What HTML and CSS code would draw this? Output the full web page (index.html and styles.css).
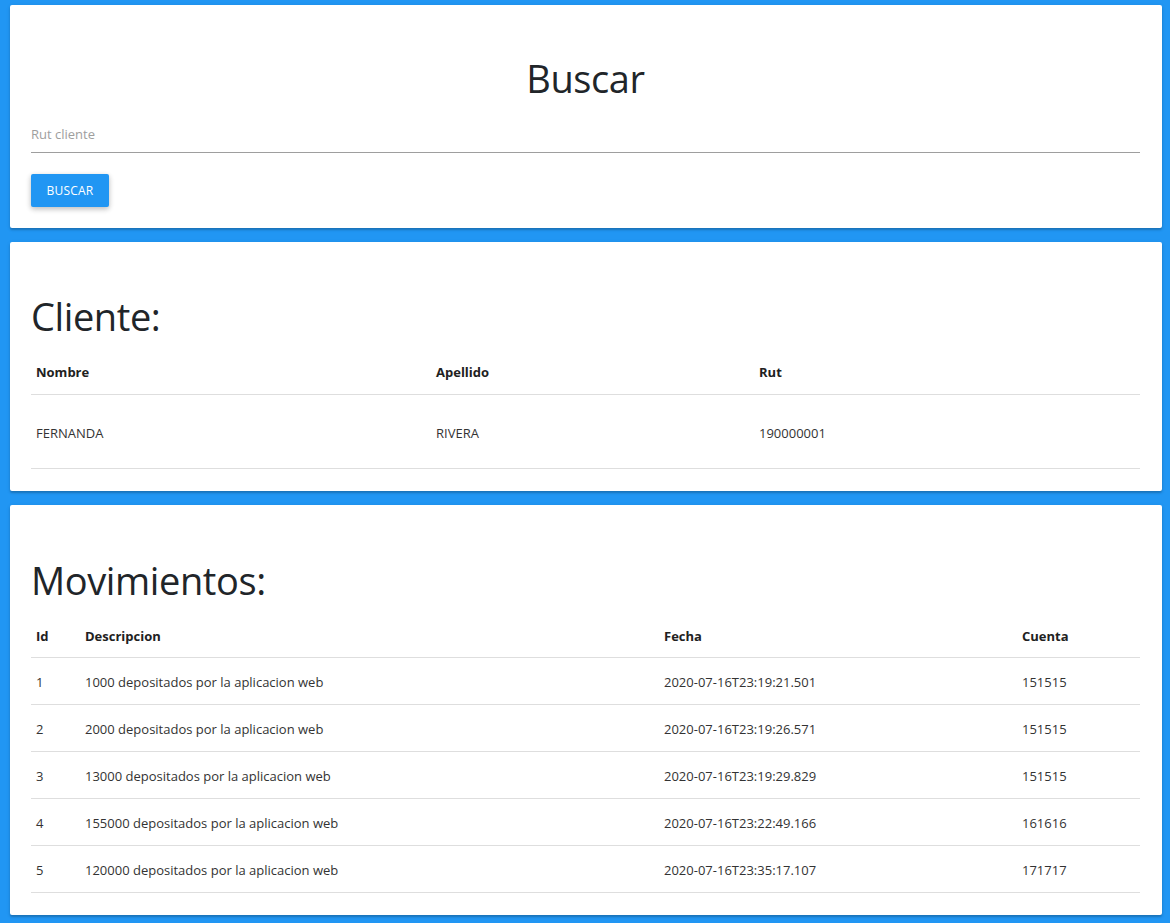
FILE: index.html
```html
<!DOCTYPE html>
<html lang="es">
<head>
<meta charset="utf-8">
<title>Buscar</title>
<link rel="stylesheet" href="styles.css">
</head>
<body>
<main class="page">
  <section class="card card-search">
    <h2 class="title title-center">Buscar</h2>
    <input class="field" type="text" placeholder="Rut cliente">
    <button class="btn" type="button">Buscar</button>
  </section>

  <section class="card">
    <h2 class="title">Cliente:</h2>
    <table class="table table-client">
      <colgroup>
        <col class="c-nombre"><col class="c-apellido"><col class="c-rut">
      </colgroup>
      <thead>
        <tr><th>Nombre</th><th>Apellido</th><th>Rut</th></tr>
      </thead>
      <tbody>
        <tr><td>FERNANDA</td><td>RIVERA</td><td>190000001</td></tr>
      </tbody>
    </table>
  </section>

  <section class="card card-moves">
    <h2 class="title">Movimientos:</h2>
    <table class="table table-moves">
      <colgroup>
        <col class="c-id"><col class="c-desc"><col class="c-fecha"><col class="c-cuenta">
      </colgroup>
      <thead>
        <tr><th>Id</th><th>Descripcion</th><th>Fecha</th><th>Cuenta</th></tr>
      </thead>
      <tbody>
        <tr><td>1</td><td>1000 depositados por la aplicacion web</td><td>2020-07-16T23:19:21.501</td><td>151515</td></tr>
        <tr><td>2</td><td>2000 depositados por la aplicacion web</td><td>2020-07-16T23:19:26.571</td><td>151515</td></tr>
        <tr><td>3</td><td>13000 depositados por la aplicacion web</td><td>2020-07-16T23:19:29.829</td><td>151515</td></tr>
        <tr><td>4</td><td>155000 depositados por la aplicacion web</td><td>2020-07-16T23:22:49.166</td><td>161616</td></tr>
        <tr><td>5</td><td>120000 depositados por la aplicacion web</td><td>2020-07-16T23:35:17.107</td><td>171717</td></tr>
      </tbody>
    </table>
  </section>
</main>
</body>
</html>
```

FILE: styles.css
```css
* { box-sizing: border-box; }

html, body {
  margin: 0;
  padding: 0;
  background: #2196f3;
  font-family: "Open Sans", "Noto Sans", "Liberation Sans", sans-serif;
  color: #212529;
}

.page {
  display: flex;
  flex-direction: column;
  gap: 14px;
  padding: 5px 8px 8px 10px;
}

.card {
  background: #fff;
  border-radius: 2px;
  box-shadow: 0 2px 2px rgba(0, 0, 0, 0.18), 0 1px 4px rgba(0, 0, 0, 0.1);
  padding: 50px 22px 22px 21px;
}

.card-search {
  padding: 49px 22px 21px 21px;
}

.card-moves {
  padding-top: 51px;
}

.title {
  margin: 0;
  font-size: 38px;
  line-height: 48px;
  font-weight: 400;
  letter-spacing: -0.4px;
  color: #212529;
}

.title-center { text-align: center; }

.field {
  display: block;
  width: 100%;
  height: 29px;
  margin-top: 22px;
  padding: 0 0 8px 0;
  border: none;
  border-bottom: 1px solid #9e9e9e;
  font-family: inherit;
  font-size: 13px;
  line-height: 20px;
  color: #212529;
  outline: none;
  background: transparent;
}

.field::placeholder { color: #9e9e9e; }

.btn {
  display: block;
  margin-top: 21px;
  width: 78px;
  height: 33px;
  border: none;
  border-radius: 2px;
  background: #2196f3;
  color: #fff;
  font-family: inherit;
  font-size: 12px;
  text-transform: uppercase;
  letter-spacing: 0.2px;
  box-shadow: 0 2px 5px rgba(0, 0, 0, 0.16), 0 2px 6px rgba(0, 0, 0, 0.12);
  padding: 0;
}

.table {
  width: 100%;
  margin-top: 11px;
  border-collapse: collapse;
  table-layout: fixed;
  font-size: 13px;
}

.table th {
  text-align: left;
  font-weight: 700;
  color: #212121;
  height: 43px;
  padding: 0 5px;
  border-bottom: 1px solid #dedede;
}

.table td {
  text-align: left;
  font-weight: 400;
  color: #333;
  padding: 0 5px;
  border-bottom: 1px solid #dedede;
}

.table-client td { height: 74px; padding-top: 4px; }
.table-moves td { height: 47px; padding-top: 2px; }

.c-nombre { width: 400px; }
.c-apellido { width: 323px; }
.c-rut { width: auto; }

.c-id { width: 49px; }
.c-desc { width: 579px; }
.c-fecha { width: 358px; }
.c-cuenta { width: auto; }
```
